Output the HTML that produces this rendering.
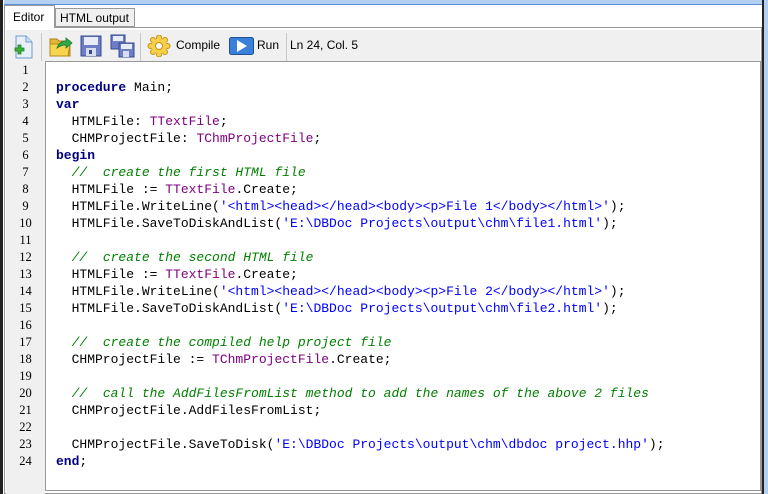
<!DOCTYPE html>
<html><head><meta charset="utf-8"><style>
*{margin:0;padding:0;box-sizing:border-box}
body{width:768px;height:494px;background:#fff;position:relative;overflow:hidden;font-family:"Liberation Sans",sans-serif}
.abs{position:absolute}
#top{left:0;top:0;width:768px;height:5px;background:#b3cff2;border-bottom:1px solid #5b8fd6}
#lb{left:0;top:0;width:4px;height:494px;background:#fff;border-left:3px solid #222}
#rb{left:762px;top:0;width:6px;height:494px;background:#b3cff2;border-left:2px solid #222}
.tab{font-size:12px;color:#000}
#t1{left:4px;top:5px;width:51px;height:23px;background:#fff;border:1px solid #999;border-bottom:none;padding:4px 0 0 8px;z-index:2}
#t2{left:55px;top:8px;width:80px;height:19px;background:#f0f0f0;border:1px solid #999;padding:2px 0 0 4px}
#panel{left:4px;top:27px;width:758px;height:467px;border:1px solid #999;background:#fff}
#tb{left:6px;top:30px;width:754px;height:31px;background:#f0f0f0}
.sep{position:absolute;top:33px;width:1px;height:28px;background:#c8c8c8}
.tt{position:absolute;font-size:12px;top:38px}
#gut{left:6px;top:61px;width:39px;height:433px;background:#f0f0f0}
#code{left:45px;top:61px;width:716px;height:430px;border:1px solid #999;background:#fff}
.ln{position:absolute;left:6px;width:39px;text-align:center;font-family:"Liberation Serif",serif;font-size:12.5px}
pre{position:absolute;left:56px;top:79px;font-family:"Liberation Mono",monospace;font-size:13px;line-height:17px;letter-spacing:0px;color:#000}
.k{color:#000080;font-weight:bold}.t{color:#800080}.s{color:#0000ff}.c{color:#008000;font-style:italic}
</style></head><body>
<div class="abs" id="top"></div>
<div class="abs" id="panel"></div>
<div class="abs tab" id="t1">Editor</div>
<div class="abs tab" id="t2">HTML output</div>
<div class="abs" id="tb"></div>
<svg class="abs" style="left:10px;top:34px" width="24" height="26"><path d="M6 2h10l6 6v16H6z" fill="#e8f1fb" stroke="#6b9bd0"/><path d="M16 2v6h6" fill="#cfe0f4" stroke="#6b9bd0"/><path d="M5 14h3v-3h3v3h3v3h-3v3H8v-3H5z" fill="#3cb33c" stroke="#1d7a1d" stroke-width=".8"/></svg>
<div class="sep" style="left:41px"></div>
<svg class="abs" style="left:48px;top:34px" width="26" height="24"><path d="M2 5h7l2 2h11v15H2z" fill="#e3b83a" stroke="#a8821a"/><path d="M2 10h20l-2 12H2z" fill="#f7d54f" stroke="#b08a1c"/><path d="M9 14c2-6 6-7 9-7V4l6 5-6 5v-3c-3 0-6 1-9 3z" fill="#2fa84a" stroke="#177a2c" stroke-width=".8"/></svg>
<svg class="abs" style="left:80px;top:35px" width="22" height="22"><rect x="1" y="1" width="20" height="20" fill="#6c7fc6" stroke="#39488c"/><rect x="4" y="2" width="14" height="8" fill="#e8ecf8"/><rect x="6" y="13" width="10" height="8" fill="#d7dcee"/><rect x="9" y="15" width="3" height="4" fill="#39488c"/></svg>
<svg class="abs" style="left:110px;top:34px" width="26" height="24"><rect x="1" y="1" width="14" height="14" fill="#6c7fc6" stroke="#39488c"/><rect x="3" y="2" width="10" height="5" fill="#e8ecf8"/><rect x="9" y="9" width="15" height="14" fill="#6c7fc6" stroke="#39488c"/><rect x="11" y="10" width="11" height="5" fill="#e8ecf8"/><rect x="13" y="17" width="6" height="6" fill="#d7dcee"/></svg>
<div class="sep" style="left:140px"></div>
<svg class="abs" style="left:147px;top:35px" width="24" height="22"><g stroke="#c48f10" fill="#f7d04a" stroke-width="1"><circle cx="12" cy="2.5" r="2.5"/><circle cx="12" cy="19.5" r="2.5"/><circle cx="3.5" cy="11" r="2.5"/><circle cx="20.5" cy="11" r="2.5"/><circle cx="6" cy="5" r="2.5"/><circle cx="18" cy="5" r="2.5"/><circle cx="6" cy="17" r="2.5"/><circle cx="18" cy="17" r="2.5"/></g><circle cx="12" cy="11" r="7.5" fill="#f7d04a"/><circle cx="12" cy="11" r="3.5" fill="#fff" stroke="#c48f10"/></svg>
<div class="tt" style="left:176px">Compile</div>
<svg class="abs" style="left:229px;top:37px" width="25" height="18"><rect x="0.5" y="0.5" width="24" height="17" rx="2" fill="#3a7fd8" stroke="#1d4f99"/><path d="M8 3l10 6-10 6z" fill="#fff"/></svg>
<div class="tt" style="left:257px">Run</div>
<div class="sep" style="left:286px"></div>
<div class="tt" style="left:290px">Ln 24, Col. 5</div>
<div class="abs" id="gut"></div>
<div class="abs" id="code"></div>
<div class="ln" style="top:63px">1</div><div class="ln" style="top:80px">2</div><div class="ln" style="top:97px">3</div><div class="ln" style="top:114px">4</div><div class="ln" style="top:131px">5</div><div class="ln" style="top:148px">6</div><div class="ln" style="top:165px">7</div><div class="ln" style="top:182px">8</div><div class="ln" style="top:199px">9</div><div class="ln" style="top:216px">10</div><div class="ln" style="top:233px">11</div><div class="ln" style="top:250px">12</div><div class="ln" style="top:267px">13</div><div class="ln" style="top:284px">14</div><div class="ln" style="top:301px">15</div><div class="ln" style="top:318px">16</div><div class="ln" style="top:335px">17</div><div class="ln" style="top:352px">18</div><div class="ln" style="top:369px">19</div><div class="ln" style="top:386px">20</div><div class="ln" style="top:403px">21</div><div class="ln" style="top:420px">22</div><div class="ln" style="top:437px">23</div><div class="ln" style="top:454px">24</div>
<pre><span class="k">procedure</span> Main;
<span class="k">var</span>
  HTMLFile: <span class="t">TTextFile</span>;
  CHMProjectFile: <span class="t">TChmProjectFile</span>;
<span class="k">begin</span>
  <span class="c">//  create the first HTML file</span>
  HTMLFile := <span class="t">TTextFile</span>.Create;
  HTMLFile.WriteLine(<span class="s">'&lt;html&gt;&lt;head&gt;&lt;/head&gt;&lt;body&gt;&lt;p&gt;File 1&lt;/body&gt;&lt;/html&gt;'</span>);
  HTMLFile.SaveToDiskAndList(<span class="s">'E:\DBDoc Projects\output\chm\file1.html'</span>);

  <span class="c">//  create the second HTML file</span>
  HTMLFile := <span class="t">TTextFile</span>.Create;
  HTMLFile.WriteLine(<span class="s">'&lt;html&gt;&lt;head&gt;&lt;/head&gt;&lt;body&gt;&lt;p&gt;File 2&lt;/body&gt;&lt;/html&gt;'</span>);
  HTMLFile.SaveToDiskAndList(<span class="s">'E:\DBDoc Projects\output\chm\file2.html'</span>);

  <span class="c">//  create the compiled help project file</span>
  CHMProjectFile := <span class="t">TChmProjectFile</span>.Create;

  <span class="c">//  call the AddFilesFromList method to add the names of the above 2 files</span>
  CHMProjectFile.AddFilesFromList;

  CHMProjectFile.SaveToDisk(<span class="s">'E:\DBDoc Projects\output\chm\dbdoc project.hhp'</span>);
<span class="k">end</span>;
</pre>
<div class="abs" id="lb"></div>
<div class="abs" id="rb"></div>
</body></html>
